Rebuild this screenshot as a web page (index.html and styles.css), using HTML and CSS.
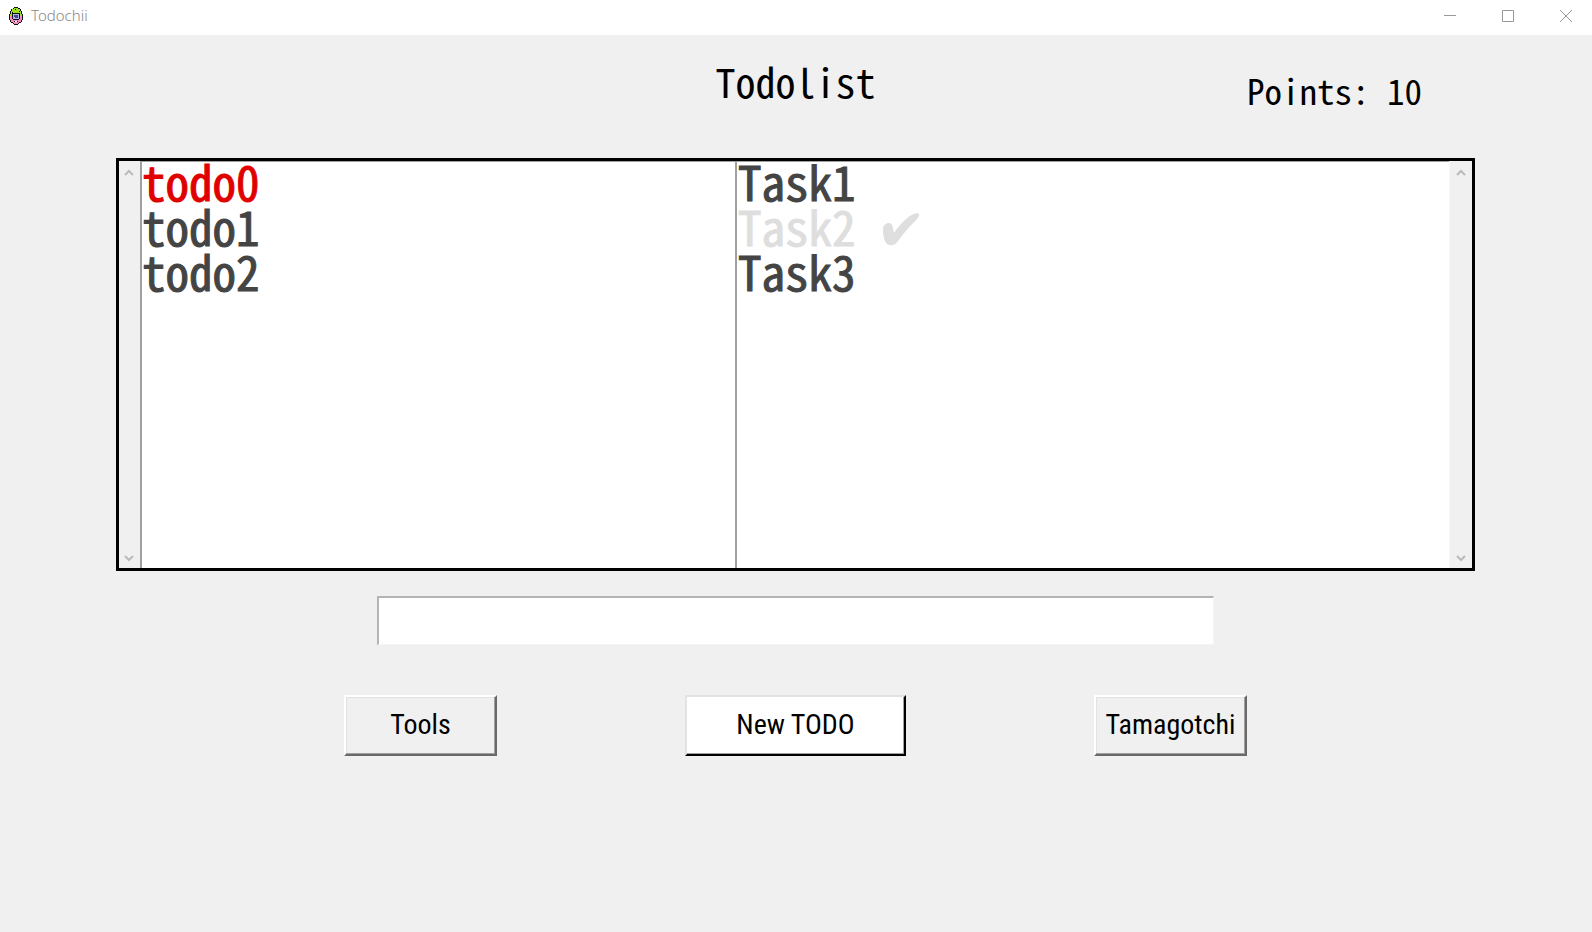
FILE: index.html
```html
<!DOCTYPE html>
<html lang="en">
<head>
<meta charset="utf-8">
<title>Todochii</title>
<link rel="stylesheet" href="styles.css">
</head>
<body>
<header class="titlebar">
  <svg class="app-icon" viewBox="0 0 14 18" width="14" height="18" shape-rendering="crispEdges" aria-hidden="true">
    <path fill="#111" d="M5 0h4v1h2v1h1v2h1v3h1v6h-1v2h-1v1h-2v1H9v1H5v-1H4v-1H2v-1H1v-2H0V7h1V4h1V2h2V1h1z"/>
    <path fill="#9be01a" d="M5 1h4v1h2v2h1v3h1v2H1V7h1V4h1V2h2z"/>
    <path fill="#f58cc0" d="M1 9h12v4h-1v2h-2v1H9v1H5v-1H4v-1H2v-2H1z"/>
    <path fill="#111" d="M6 2h1v1H6zM3 5h1v1H3zM10 4h1v1h-1zM3 6h8v6h-1v1H4v-1H3zM5 14h1v1H5zM8 14h1v1H8z"/>
    <path fill="#aeb4f0" d="M4 7h6v5H4z"/>
    <path fill="#4a4690" d="M5 8h4v3H6v-1H5z"/>
    <path fill="#fff" d="M6 14h2v1H6z"/>
  </svg>
  <span class="app-name">Todochii</span>
  <div class="window-buttons">
    <button class="window-button" type="button" aria-label="Minimize"><svg viewBox="0 0 12 12" width="12" height="12"><path d="M0 5.5h12"/></svg></button>
    <button class="window-button" type="button" aria-label="Maximize"><svg viewBox="0 0 12 12" width="12" height="12"><path d="M.5.5h11v11H.5z"/></svg></button>
    <button class="window-button" type="button" aria-label="Close"><svg viewBox="0 0 12 12" width="12" height="12"><path d="M0 0l12 12M12 0L0 12"/></svg></button>
  </div>
</header>
<main class="app">
  <div class="heading">
    <h1 class="title">Todolist</h1>
    <p class="points">Points: 10</p>
  </div>
  <div class="board">
    <div class="scroll">
      <svg viewBox="0 0 10 8" width="10" height="8"><path d="M1 6l4-4 4 4"/></svg>
      <svg viewBox="0 0 10 8" width="10" height="8"><path d="M1 2l4 4 4-4"/></svg>
    </div>
    <ul class="list">
      <li class="urgent">todo0</li>
      <li>todo1</li>
      <li>todo2</li>
    </ul>
    <ul class="list tasks">
      <li>Task1</li>
      <li class="done">Task2 <svg class="check" viewBox="0 0 36 33" width="36" height="33" role="img" aria-label="done"><path d="M0 17C0 12 3 10 6 10C10 10 10 16 11 20C17 11 25 3 31 1C34 0 36 0 36 2C36 4 35 5 33 7C26 14 20 21 15 28C12 32 10 33 7 32C2 32 0 24 0 17z"/></svg></li>
      <li>Task3</li>
    </ul>
    <div class="scroll scroll-end">
      <svg viewBox="0 0 10 8" width="10" height="8"><path d="M1 6l4-4 4 4"/></svg>
      <svg viewBox="0 0 10 8" width="10" height="8"><path d="M1 2l4 4 4-4"/></svg>
    </div>
  </div>
  <input class="entry" type="text" aria-label="New todo text">
  <div class="actions">
    <button class="action" type="button">Tools</button>
    <button class="action primary" type="button">New TODO</button>
    <button class="action" type="button">Tamagotchi</button>
  </div>
</main>
</body>
</html>
```
FILE: styles.css
```css
* { box-sizing: border-box; }

body {
  margin: 0;
  min-height: 100vh;
  background: #f0f0f0;
  color: #000;
  font-family: "Noto Sans Mono CJK JP", "Liberation Mono", monospace;
}

.titlebar {
  display: flex;
  align-items: center;
  height: 35px;
  padding: 0 0 4px 9px;
  background: #fff;
}

.app-name {
  margin-left: 8px;
  padding-bottom: 1px;
  color: #888;
  font: 300 15px/20px "Noto Sans", "Open Sans", sans-serif;
}

.window-buttons {
  display: flex;
  margin-left: auto;
}

.window-button {
  display: grid;
  place-items: center;
  width: 58px;
  height: 30px;
  padding: 0 0 0 6px;
  border: 0;
  background: none;
}

.window-button svg {
  fill: none;
  stroke: #999;
}

.app {
  display: flex;
  flex-direction: column;
  align-items: center;
  padding: 0 117px 0 116px;
}

.heading {
  display: grid;
  grid-template-columns: 1fr auto 1fr;
  width: 100%;
  height: 123px;
}

.title {
  grid-column: 2;
  margin: 18px 0 0;
  font-size: 40px;
  font-weight: 400;
  line-height: 56px;
}

.points {
  justify-self: end;
  margin: 30px 53px 0 0;
  font-size: 35px;
  line-height: 50px;
}

.board {
  display: grid;
  grid-template-columns: 21px 5fr 6fr 23px;
  width: 100%;
  height: 413px;
  border: 3px solid #000;
}

.scroll {
  display: flex;
  flex-direction: column;
  justify-content: space-between;
  align-items: center;
  padding: 8px 1px 6px 0;
}

.scroll-end {
  padding-right: 0;
  border-left: 1px solid #f8f8f8;
}

.scroll svg {
  fill: none;
  stroke: #bbb;
  stroke-width: 2;
}

.list {
  margin: 0;
  padding: 0;
  border-top: 1px solid #a0a0a0;
  border-left: 2px solid #a0a0a0;
  background: #fff;
  color: #444;
  font-size: 47px;
  font-weight: 400;
  line-height: 38px;
  list-style: none;
  -webkit-text-stroke: 1px;
}

.tasks { padding-left: 1px; }

.list li { height: 45px; }

.urgent { color: #e00000; }

.done { color: #dedede; }

.check {
  margin-left: 4px;
  fill: #dedede;
}

.entry {
  width: 837px;
  max-width: 100%;
  height: 49px;
  margin-top: 25px;
  padding: 2px 4px;
  border: 1px solid #f5f5f5;
  border-top: 2px solid #b4b4b4;
  border-left: 2px solid #b4b4b4;
  background: #fff;
  font: inherit;
  font-size: 32px;
}

.actions {
  display: flex;
  gap: 188px;
  margin-top: 50px;
}

.action {
  width: 153px;
  height: 61px;
  padding: 0 0 2px;
  border: 2px solid;
  border-color: #fff #696969 #696969 #fff;
  box-shadow: inset -1px -1px #a0a0a0, inset 1px 1px #e3e3e3;
  background: #f0f0f0;
  color: #000;
  font: 28px/40px "Roboto Condensed", "Noto Sans Mono CJK JP", monospace;
}

.primary {
  width: 221px;
  border-color: #e3e3e3 #000 #000 #e3e3e3;
  box-shadow: inset -1px -1px #a0a0a0;
  background: #fff;
}
```
